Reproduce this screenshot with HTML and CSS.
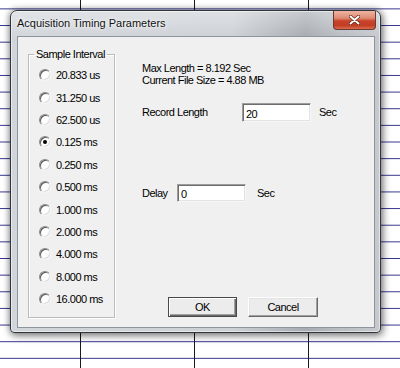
FILE: index.html
```html
<!DOCTYPE html>
<html lang="en">
<head>
  <meta charset="UTF-8">
  <title>Acquisition Timing Parameters</title>
  <link rel="stylesheet" href="styles.css">
</head>
<body>

  <!-- dialog window -->
  <div class="window">
    <div class="titlebar">
      <span class="title">Acquisition Timing Parameters</span>
      <button class="close">
        <svg width="11" height="10" viewBox="0 0 11 10">
          <path d="M1.5 1.5 L9.5 8.5 M9.5 1.5 L1.5 8.5" stroke="#5a2418" stroke-width="3.4" stroke-linecap="round"/>
          <path d="M1.5 1.5 L9.5 8.5 M9.5 1.5 L1.5 8.5" stroke="#fff" stroke-width="2" stroke-linecap="round"/>
        </svg>
      </button>
    </div>

    <div class="client">
      <!-- sample interval options -->
      <fieldset class="group">
        <legend>Sample Interval</legend>
        <div class="opt"><span class="dot"></span>20.833 us</div>
        <div class="opt"><span class="dot"></span>31.250 us</div>
        <div class="opt"><span class="dot"></span>62.500 us</div>
        <div class="opt"><span class="dot checked"></span>0.125 ms</div>
        <div class="opt"><span class="dot"></span>0.250 ms</div>
        <div class="opt"><span class="dot"></span>0.500 ms</div>
        <div class="opt"><span class="dot"></span>1.000 ms</div>
        <div class="opt"><span class="dot"></span>2.000 ms</div>
        <div class="opt"><span class="dot"></span>4.000 ms</div>
        <div class="opt"><span class="dot"></span>8.000 ms</div>
        <div class="opt"><span class="dot"></span>16.000 ms</div>
      </fieldset>

      <div class="panel">
        <div class="info">Max Length = 8.192 Sec<br>Current File Size = 4.88 MB</div>

        <div class="field record">
          <span class="name">Record Length</span>
          <input class="edit" type="text" value="20">
          <span class="unit">Sec</span>
        </div>

        <div class="field delay">
          <span class="name">Delay</span>
          <input class="edit" type="text" value="0">
          <span class="unit">Sec</span>
        </div>

        <div class="buttons">
          <button class="btn default">OK</button>
          <button class="btn cancel">Cancel</button>
        </div>
      </div>
    </div>
  </div>

</body>
</html>
```

FILE: styles.css
```css
* {
  box-sizing: border-box;
}

body {
  margin: 0;
  height: 368px;
  overflow: hidden;
  padding: 10px 0 0 10px;
  font-family: "Liberation Sans", Arial, sans-serif;
  font-size: 11px;
  background-color: #fff;
  background-image:
    linear-gradient(90deg, #1a1a1a 1px, transparent 1px),
    linear-gradient(180deg, #34348e 1px, transparent 1px);
  background-size: 114px 100%, 100% 16.65px;
  background-position: 80px 0, 0 8.4px;
}

.window {
  width: 371px;
  height: 323px;
  display: flex;
  flex-direction: column;
  border: 1px solid #30353b;
  border-radius: 7px 7px 4px 4px;
  background:
    linear-gradient(180deg, rgba(255, 255, 255, 0.35) 0, rgba(255, 255, 255, 0) 26px),
    linear-gradient(90deg, #d2d6db 0%, #cdd1d6 60%, #a8acb2 80%, #b9bdc2 88%, #c6cacf 100%);
  box-shadow:
    inset 0 0 0 1px rgba(255, 255, 255, 0.5),
    0 0 6px 1px rgba(0, 0, 0, 0.35),
    2px 3px 8px rgba(0, 0, 0, 0.35);
}

.titlebar {
  height: 25px;
  display: flex;
  justify-content: space-between;
  align-items: flex-start;
}

.title {
  padding: 6px 0 0 6px;
  line-height: 13px;
  color: #111;
  text-shadow: 0 0 6px #fff, 0 0 3px #fff;
}

.close {
  width: 43px;
  height: 19px;
  margin-right: 4px;
  padding: 0;
  border: 1px solid #6b3a32;
  border-top: none;
  border-radius: 0 0 4px 4px;
  background: linear-gradient(180deg, #eeb4a2 0%, #df8a72 40%, #c9432a 55%, #c13d24 80%, #dc6c4e 100%);
  display: flex;
  align-items: center;
  justify-content: center;
}

.client {
  flex: 1;
  margin: 0 5px 4px 6px;
  background: #f0f0f0;
  border: 1px solid #8c949c;
  display: flex;
  align-items: flex-start;
  letter-spacing: -0.5px;
  color: #000;
}

.group {
  margin: 11px 0 0 10px;
  width: 87px;
  min-width: 0;
  padding: 3px 0 7px 0;
  border: 1px solid #bcbcbc;
  box-shadow: inset 1px 1px 0 #fff, 1px 1px 0 #fff;
}

.group legend {
  margin-left: 5px;
  padding: 0 2px;
  line-height: 13px;
}

.opt {
  display: flex;
  align-items: center;
  gap: 5px;
  height: 22.4px;
  padding-left: 10px;
  white-space: nowrap;
}

.dot {
  width: 12px;
  height: 12px;
  flex: none;
  border-radius: 50%;
  background: #fff;
  border: 1px solid;
  border-color: #8a8a8a #f4f4f4 #f4f4f4 #8a8a8a;
  box-shadow: inset 1px 1px 0 #5a5a5a, inset -1px -1px 0 #dcdcdc;
  display: flex;
  align-items: center;
  justify-content: center;
}

.dot.checked::after {
  content: "";
  width: 4px;
  height: 4px;
  border-radius: 50%;
  background: #000;
}

.panel {
  margin-left: 27px;
  display: flex;
  flex-direction: column;
  white-space: nowrap;
}

.info {
  margin-top: 25px;
  line-height: 12px;
}

.field {
  display: flex;
  align-items: center;
  height: 19px;
}

.record {
  margin-top: 17px;
}

.record .name {
  width: 100px;
  margin-bottom: 2px;
}

.delay {
  margin-top: 62px;
  height: 18px;
}

.delay .name {
  width: 35px;
}

.edit {
  width: 69px;
  height: 100%;
  margin: 0;
  padding: 2px 3px 0;
  font: inherit;
  letter-spacing: -0.5px;
  color: #000;
  background: #fff;
  border: 1px solid;
  border-color: #9c9c9c #f6f6f6 #f6f6f6 #9c9c9c;
  box-shadow: inset 1px 1px 0 #6d6d6d, inset -1px -1px 0 #e3e3e3;
  outline: none;
}

.record .unit {
  margin-left: 8px;
  margin-bottom: 2px;
}

.delay .unit {
  margin-left: 11px;
}

.buttons {
  margin-top: 95px;
  margin-left: 26px;
  display: flex;
  gap: 11px;
}

.btn {
  width: 69px;
  height: 20px;
  padding: 0;
  font: inherit;
  letter-spacing: -0.5px;
  color: #000;
  background: #ececec;
  border: 1px solid;
  border-color: #fff #696969 #696969 #fff;
  box-shadow: inset -1px -1px 0 #a0a0a0, inset 1px 1px 0 #e3e3e3;
}

.btn.default {
  border-color: #4a4a4a;
  box-shadow: inset 1px 1px 0 #fff, inset -1px -1px 0 #696969, inset -2px -2px 0 #a0a0a0;
}

.btn.cancel {
  width: 70px;
}
```
